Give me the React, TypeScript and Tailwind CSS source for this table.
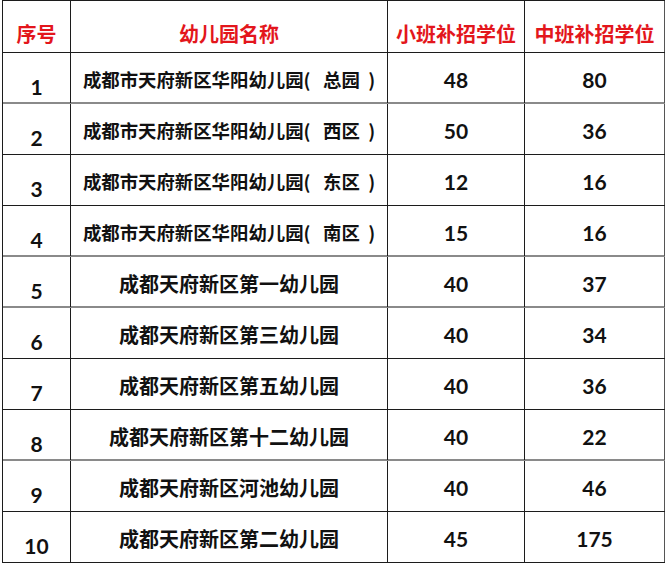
const rows = [
  { no: 1, name: '成都市天府新区华阳幼儿园(   总园  )', small: 48, mid: 80, gray: true },
  { no: 2, name: '成都市天府新区华阳幼儿园(   西区  )', small: 50, mid: 36, gray: false },
  { no: 3, name: '成都市天府新区华阳幼儿园(   东区  )', small: 12, mid: 16, gray: false },
  { no: 4, name: '成都市天府新区华阳幼儿园(   南区  )', small: 15, mid: 16, gray: true },
  { no: 5, name: '成都天府新区第一幼儿园', small: 40, mid: 37, gray: true },
  { no: 6, name: '成都天府新区第三幼儿园', small: 40, mid: 34, gray: false },
  { no: 7, name: '成都天府新区第五幼儿园', small: 40, mid: 36, gray: false },
  { no: 8, name: '成都天府新区第十二幼儿园', small: 40, mid: 22, gray: true },
  { no: 9, name: '成都天府新区河池幼儿园', small: 40, mid: 46, gray: false },
  { no: 10, name: '成都天府新区第二幼儿园', small: 45, mid: 175, gray: false },
];

const cjk = "font-['Noto_Sans_CJK_SC',sans-serif]";
const num = "font-['Lato','Noto_Sans_CJK_SC',sans-serif]";

export default function App() {
  return (
    <div className="w-[666px] h-[564px] bg-white pl-[2px]">
      <div className="w-[663px] border-l border-t border-[#1c1c1c]">
        {/* header */}
        <div className="grid grid-cols-[68px_317px_137px_140px] h-[52px] border-b border-[#1c1c1c]">
          <div className={`flex items-center justify-center pt-[14px] border-r border-[#1c1c1c] text-[20px] font-bold text-[#e3161c] ${cjk}`}>序号</div>
          <div className={`flex items-center justify-center pt-[14px] border-r border-[#1c1c1c] text-[20px] font-bold text-[#e3161c] ${cjk}`}>幼儿园名称</div>
          <div className={`flex items-center justify-center pt-[14px] border-r border-[#1c1c1c] text-[20px] font-bold text-[#e3161c] ${cjk}`}>小班补招学位</div>
          <div className={`flex items-center justify-center pt-[14px] border-r border-[#555] text-[20px] font-bold text-[#e3161c] ${cjk}`}>中班补招学位</div>
        </div>

        {/* body rows */}
        {rows.map((r) => (
          <div
            key={r.no}
            className={`grid grid-cols-[68px_317px_137px_140px] h-[51px] ${
              r.gray ? 'border-b-2 border-[#8a8a8a]' : 'border-b border-[#1c1c1c]'
            }`}
          >
            <div className={`flex items-center justify-center pt-[18px] border-r border-[#1c1c1c] text-[21px] font-bold text-[#111] ${num}`}>{r.no}</div>
            <div
              className={`flex items-center justify-center pt-[4px] border-r border-[#1c1c1c] font-bold text-[#111] whitespace-pre ${cjk} ${
                r.no <= 4 ? 'text-[18.4px]' : 'text-[20px]'
              }`}
            >
              {r.name}
            </div>
            <div className={`flex items-center justify-center pt-[3px] border-r border-[#1c1c1c] text-[21px] font-bold text-[#111] ${num}`}>{r.small}</div>
            <div className={`flex items-center justify-center pt-[3px] border-r border-[#555] text-[21px] font-bold text-[#111] ${num}`}>{r.mid}</div>
          </div>
        ))}
      </div>
    </div>
  );
}
